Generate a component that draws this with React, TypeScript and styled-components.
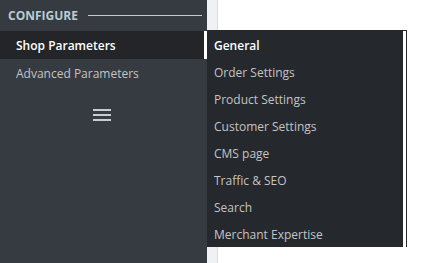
import styled, { createGlobalStyle } from "styled-components";

const GlobalStyle = createGlobalStyle`
  body {
    margin: 0;
    background: #ffffff;
    font-family: "Open Sans", "Noto Sans", sans-serif;
  }
`;

const Page = styled.div`
  display: flex;
  height: 263px;
  width: 424px;
  overflow: hidden;
`;

const Sidebar = styled.nav`
  width: 207px;
  flex-shrink: 0;
  background: #363a41;
  display: flex;
  flex-direction: column;
`;

const SectionHeader = styled.div`
  height: 31px;
  display: flex;
  align-items: center;
  gap: 10px;
  padding: 0 5px 0 8px;
`;

const SectionTitle = styled.span`
  color: #bbcdd2;
  font-size: 12px;
  font-weight: 700;
  text-transform: uppercase;
`;

const SectionLine = styled.div`
  flex: 1;
  height: 1px;
  background: #bbcdd2;
`;

const NavItem = styled.div<{ $active?: boolean }>`
  height: 28px;
  display: flex;
  align-items: center;
  padding-left: 16px;
  font-size: 12px;
  color: ${(p) => (p.$active ? "#ffffff" : "#c4c4c4")};
  font-weight: ${(p) => (p.$active ? 600 : 400)};
  background: ${(p) => (p.$active ? "#232529" : "transparent")};
  border-right: 3px solid ${(p) => (p.$active ? "#ffffff" : "transparent")};
`;

const Collapse = styled.div`
  display: flex;
  justify-content: center;
  padding: 22px 3px 0 0;
`;

const Burger = styled.div`
  width: 18px;
  display: flex;
  flex-direction: column;
  gap: 3px;

  span {
    display: block;
    height: 2px;
    background: #c9cdd0;
  }
`;

const Main = styled.main`
  flex: 1;
  position: relative;
  display: flex;
`;

const Gutter = styled.div`
  width: 10px;
  background: #eff1f2;
  border-right: 1px solid #d9dcdd;
`;

const Flyout = styled.div`
  position: absolute;
  top: 31px;
  left: 0;
  background: #ffffff;
  padding-right: 3px;
  border-top: 1px solid #25282d;
  border-right: 1px solid #25282d;
  margin-top: -1px;
`;

const SubList = styled.ul`
  list-style: none;
  margin: 0;
  padding: 0;
  width: 196px;
  background: #25282d;
`;

const SubItem = styled.li<{ $active?: boolean }>`
  height: 26px;
  padding: 1px 0 0 7px;
  display: flex;
  align-items: center;
  font-size: 12px;
  color: ${(p) => (p.$active ? "#ffffff" : "#c4c4c4")};
  font-weight: ${(p) => (p.$active ? 600 : 400)};
`;

const subItems = [
  "General",
  "Order Settings",
  "Product Settings",
  "Customer Settings",
  "CMS page",
  "Traffic & SEO",
  "Search",
  "Merchant Expertise",
];

const App = () => {
  return (
    <>
      <GlobalStyle />
      <Page>
        <Sidebar>
          <SectionHeader>
            <SectionTitle>Configure</SectionTitle>
            <SectionLine />
          </SectionHeader>
          <NavItem $active>Shop Parameters</NavItem>
          <NavItem>Advanced Parameters</NavItem>
          <Collapse>
            <Burger>
              <span />
              <span />
              <span />
            </Burger>
          </Collapse>
        </Sidebar>
        <Main>
          <Gutter />
          <Flyout>
            <SubList>
              {subItems.map((s, i) => (
                <SubItem key={s} $active={i === 0}>
                  {s}
                </SubItem>
              ))}
            </SubList>
          </Flyout>
        </Main>
      </Page>
    </>
  );
};

export default App;
